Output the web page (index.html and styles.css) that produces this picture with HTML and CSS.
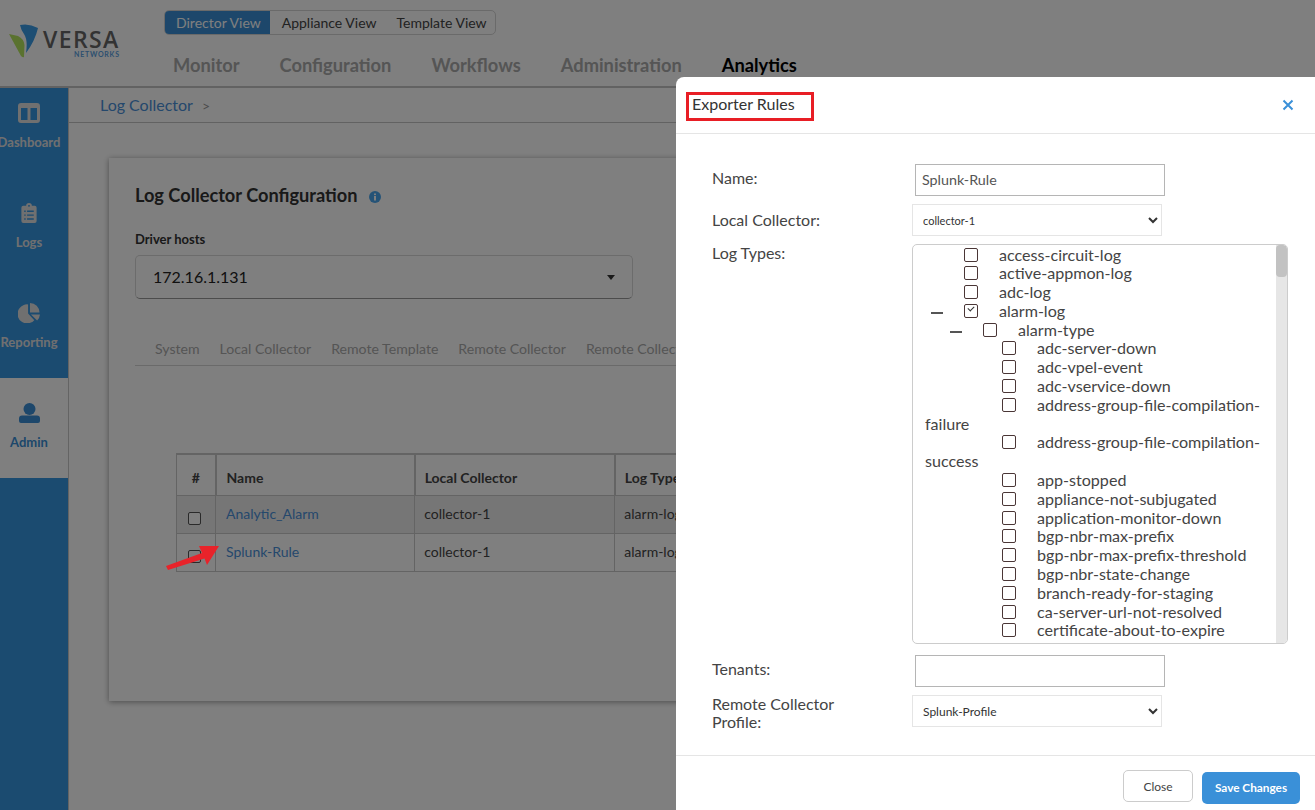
FILE: index.html
```html
<!DOCTYPE html>
<html lang="en">
<head>
<meta charset="utf-8">
<title>Exporter Rules</title>
<link rel="stylesheet" href="styles.css">
</head>
<body>
<div class="app">
  <header class="topbar">
    <div class="logo">
      <svg class="logo-mark" width="30" height="34" viewBox="0 0 30 34">
        <path d="M0 10 L9 12 Q15 15 15.500 21 L15 33 Q14 34 12 32 Z" fill="#b5e45f"/>
        <path d="M11 1 Q20 -1 29 4 Q26 17 17 29 Q19 16 15 10 Q12 6 11 1 Z" fill="#3a9ce6"/>
      </svg>
      <div class="logo-text">
        <span class="logo-name">VERSA</span>
        <span class="logo-sub">NETWORKS</span>
      </div>
    </div>
    <div class="top-right">
      <div class="views">
        <span class="view view-on">Director View</span>
        <span class="view view-mid">Appliance View</span>
        <span class="view view-end">Template View</span>
      </div>
      <nav class="mainnav">
        <span class="navitem">Monitor</span>
        <span class="navitem">Configuration</span>
        <span class="navitem">Workflows</span>
        <span class="navitem">Administration</span>
        <span class="navitem navitem-on">Analytics</span>
      </nav>
    </div>
  </header>
  <div class="body">
    <aside class="sidebar">
      <div class="side-item side-first">
        <svg class="side-icon" width="22" height="20" viewBox="0 0 22 20"><path fill="currentColor" fill-rule="evenodd" d="M3 0h16a3 3 0 0 1 3 3v14a3 3 0 0 1-3 3H3a3 3 0 0 1-3-3V3a3 3 0 0 1 3-3zM3 5v12h6.500V5zM12.500 5v12H19V5z"/></svg>
        <span>Dashboard</span>
      </div>
      <div class="side-item">
        <svg class="side-icon" width="16" height="21" viewBox="0 0 16 21"><path fill="currentColor" fill-rule="evenodd" d="M2 3h3a3 3 0 0 1 6 0h3a2 2 0 0 1 2 2v14a2 2 0 0 1-2 2H2a2 2 0 0 1-2-2V5a2 2 0 0 1 2-2zM7 3a1 1 0 1 0 2 0a1 1 0 0 0-2 0zM3 8v1.500h1.500V8zM6 8v1.500h7V8zM3 12v1.500h1.500V12zM6 12v1.500h7V12zM3 16v1.500h1.500V16zM6 16v1.500h7V16z"/></svg>
        <span>Logs</span>
      </div>
      <div class="side-item">
        <svg class="side-icon" width="23" height="21" viewBox="0 0 23 21"><path fill="currentColor" d="M10 1.500V11l6.500 7a10 10 0 1 1-6.500-16.500zM12 0a10 10 0 0 1 10 10H12zM13 12h9.500a10 10 0 0 1-3 6.300z"/></svg>
        <span>Reporting</span>
      </div>
      <div class="side-item side-on">
        <svg class="side-icon" width="21" height="20" viewBox="0 0 21 20"><circle cx="10.500" cy="6" r="6" fill="currentColor"/><path fill="currentColor" d="M3 12.500h15a3 3 0 0 1 3 3V18a2 2 0 0 1-2 2H2a2 2 0 0 1-2-2v-2.500a3 3 0 0 1 3-3z"/></svg>
        <span>Admin</span>
      </div>
    </aside>
    <main class="main">
      <div class="crumbs"><a class="crumb-link">Log Collector</a><span class="crumb-sep">&gt;</span></div>
      <section class="card">
        <h2 class="card-title">Log Collector Configuration
          <svg class="info" width="12" height="12" viewBox="0 0 12 12"><circle cx="6" cy="6" r="6" fill="#4ba6ee"/><rect x="5" y="5" width="2" height="4.500" fill="#fff"/><rect x="5" y="2.500" width="2" height="1.600" fill="#fff"/></svg>
        </h2>
        <div class="field-label">Driver hosts</div>
        <div class="driver-select"><span>172.16.1.131</span><i class="caret"></i></div>
        <div class="tabs">
          <span class="tab">System</span>
          <span class="tab">Local Collector</span>
          <span class="tab">Remote Template</span>
          <span class="tab">Remote Collector</span>
          <span class="tab">Remote Collector Profile</span>
        </div>
        <table class="grid">
          <colgroup><col class="c-num"><col class="c-name"><col class="c-local"><col class="c-type"></colgroup>
          <thead>
            <tr><th class="num">#</th><th>Name</th><th>Local Collector</th><th>Log Types</th></tr>
          </thead>
          <tbody>
            <tr class="row-shade"><td class="num"><span class="tick"></span></td><td><a class="rule-link">Analytic_Alarm</a></td><td>collector-1</td><td>alarm-log</td></tr>
            <tr><td class="num"><span class="tick"></span></td><td><a class="rule-link">Splunk-Rule</a></td><td>collector-1</td><td>alarm-log</td></tr>
          </tbody>
        </table>
      </section>
    </main>
  </div>

  <div class="scrim"></div>

  <svg class="pointer" width="56" height="26" viewBox="0 0 56 26">
    <path d="M1 23 L37 10 L34 3 L54 3 L42 22 L39.500 15.500 L3 27 Z" fill="#e8232a"/>
  </svg>

  <div class="modal">
    <div class="modal-head">
      <h3 class="modal-title">Exporter Rules</h3>
      <svg class="modal-x" width="12" height="12" viewBox="0 0 12 12"><path d="M1.500 1.500L10.500 10.500M10.500 1.500L1.500 10.500" stroke="#3a90d8" stroke-width="2" fill="none"/></svg>
    </div>
    <div class="modal-body">
      <label class="lab lab-input">Name:</label>
      <input class="text-in" type="text" value="Splunk-Rule">
      <label class="lab lab-sel">Local Collector:</label>
      <select class="sel"><option>collector-1</option></select>
      <label class="lab lab-top">Log Types:</label>
      <div class="tree">
        <div class="tree-list">
          <div class="node l0"><i class="twist"></i><i class="box"></i>access-circuit-log</div>
          <div class="node l0"><i class="twist"></i><i class="box"></i>active-appmon-log</div>
          <div class="node l0"><i class="twist"></i><i class="box"></i>adc-log</div>
          <div class="node l0"><i class="twist twist-open"></i><i class="box box-on"></i>alarm-log</div>
          <div class="node l1"><i class="twist twist-open"></i><i class="box"></i>alarm-type</div>
          <div class="node l2"><i class="twist"></i><i class="box"></i>adc-server-down</div>
          <div class="node l2"><i class="twist"></i><i class="box"></i>adc-vpel-event</div>
          <div class="node l2"><i class="twist"></i><i class="box"></i>adc-vservice-down</div>
          <div class="node l2"><i class="twist"></i><i class="box"></i>address-group-file-compilation-failure</div>
          <div class="node l2"><i class="twist"></i><i class="box"></i>address-group-file-compilation-success</div>
          <div class="node l2"><i class="twist"></i><i class="box"></i>app-stopped</div>
          <div class="node l2"><i class="twist"></i><i class="box"></i>appliance-not-subjugated</div>
          <div class="node l2"><i class="twist"></i><i class="box"></i>application-monitor-down</div>
          <div class="node l2"><i class="twist"></i><i class="box"></i>bgp-nbr-max-prefix</div>
          <div class="node l2"><i class="twist"></i><i class="box"></i>bgp-nbr-max-prefix-threshold</div>
          <div class="node l2"><i class="twist"></i><i class="box"></i>bgp-nbr-state-change</div>
          <div class="node l2"><i class="twist"></i><i class="box"></i>branch-ready-for-staging</div>
          <div class="node l2"><i class="twist"></i><i class="box"></i>ca-server-url-not-resolved</div>
          <div class="node l2"><i class="twist"></i><i class="box"></i>certificate-about-to-expire</div>
        </div>
        <div class="scroll-track"><div class="scroll-thumb"></div></div>
      </div>
      <label class="lab lab-input">Tenants:</label>
      <input class="text-in" type="text">
      <label class="lab lab-top">Remote Collector Profile:</label>
      <select class="sel sel-wide"><option>Splunk-Profile</option></select>
    </div>
    <div class="modal-foot">
      <button class="btn btn-close">Close</button>
      <button class="btn btn-save">Save Changes</button>
    </div>
  </div>
</div>
</body>
</html>
```

FILE: styles.css
```css
* { box-sizing: border-box; }
html, body { margin: 0; padding: 0; height: 100%; }
body { font-family: Lato, "Open Sans", sans-serif; color: #333; background: #fff; overflow: hidden; }
.app { position: relative; width: 1315px; height: 810px; overflow: hidden; display: flex; flex-direction: column; background: #fff; }

/* header */
.topbar { display: flex; height: 88px; flex: none; border-bottom: 2px solid #c4c4c4; }
.logo { width: 164px; flex: none; display: flex; padding: 24px 0 0 9px; gap: 4px; }
.logo-mark { flex: none; }
.logo-text { display: flex; flex-direction: column; align-items: flex-end; padding-top: 6px; }
.logo-name { font-family: "Open Sans", sans-serif; font-size: 23px; line-height: 19px; letter-spacing: 1.400px; font-weight: 600; color: #666; }
.logo-sub { font-size: 7px; line-height: 8px; margin-top: 1px; font-weight: 700; letter-spacing: 0.750px; color: #5aa0e0; }
.top-right { display: flex; flex-direction: column; padding-top: 10px; }
.views { display: inline-flex; align-self: flex-start; height: 25px; border: 1px solid #d4d4d4; border-radius: 5px; overflow: hidden; font-size: 14px; background: #fff; }
.view { line-height: 23px; color: #444; }
.view-on { background: #3a8fd6; color: #fff; padding: 0 9px 0 11px; }
.view-mid { padding: 0 11px 0 12px; }
.view-end { padding: 0 8px 0 9px; }
.mainnav { display: flex; gap: 40px; padding: 18px 0 0 9px; font-size: 18.300px; line-height: 24px; }
.navitem { color: #aaa; font-weight: 700; }
.navitem-on { color: #000; }

/* sidebar */
.body { flex: 1; display: flex; min-height: 0; }
.sidebar { width: 69px; flex: none; background: #3696e0; border-right: 1px solid #c8c8c8; color: #e0e0e0; font-size: 13px; font-weight: 700; }
.side-item { height: 100px; padding: 25px 10px 0 0; display: flex; flex-direction: column; align-items: center; gap: 10px; white-space: nowrap; line-height: 18px; }
.side-first { height: 90px; padding-top: 15px; }
.side-icon { height: 20px; flex: none; }
.side-on { background: #fff; color: #3a8fd6; }

/* main */
.main { flex: 1; min-width: 0; }
.crumbs { height: 35px; border-bottom: 1px solid #c4c4c4; padding: 7px 0 0 31px; font-size: 16px; line-height: 20px; }
.crumb-link { color: #4a90d9; }
.crumb-sep { color: #999; margin-left: 9px; font-size: 14px; }
.card { margin: 35px 0 0 40px; width: 1150px; height: 543px; background: #fff; box-shadow: 0 1px 6px rgba(0,0,0,.4); padding: 25px 26px 0; }
.card-title { margin: 0; font-size: 18.200px; line-height: 24px; font-weight: 700; color: #333; }
.info { margin-left: 7px; vertical-align: -1px; }
.field-label { margin-top: 23px; font-size: 13px; line-height: 18px; font-weight: 700; color: #333; }
.driver-select { position: relative; width: 498px; height: 44px; margin-top: 7px; border: 1px solid #d8d8d8; border-bottom: 1px solid #999; border-radius: 5px; padding: 0 17px; font-size: 16px; line-height: 42px; color: #222; }
.caret { position: absolute; right: 17px; top: 19px; border: 4px solid transparent; border-top: 5px solid #333; border-bottom: 0; }
.tabs { margin-top: 41px; height: 26px; border-bottom: 1px solid #d5d5d5; display: flex; gap: 20px; padding-left: 20px; font-size: 14.100px; line-height: 18px; color: #aaa; white-space: nowrap; }
.grid { margin: 87px 0 0 41px; border-collapse: collapse; table-layout: fixed; width: 640px; font-size: 14px; }
.c-num { width: 39px; } .c-name { width: 199px; } .c-local { width: 200px; } .c-type { width: 200px; }
.grid th, .grid td { border: 1px solid #c8c8c8; padding: 0 9px 2px; text-align: left; height: 38px; color: #444; font-weight: 400; }
.grid th { height: 41px; padding: 6px 9px 0; font-weight: 700; color: #444; border-width: 2px 2px 1px 1px; }
.grid th:nth-child(2), .grid td:nth-child(2) { padding-left: 10px; }
.grid th.num { text-align: center; padding: 6px 0 0; }
.grid td.num { padding: 4px 0 0 11px; }
.row-shade td { background: #ededed; }
.rule-link { color: #4a90d9; }
.tick { display: inline-block; width: 13px; height: 13px; border: 1px solid #555; border-radius: 2px; background: #fff; vertical-align: -3px; }

/* overlays */
.scrim { position: absolute; inset: 0; background: rgba(0,0,0,.5); }
.pointer { position: absolute; left: 165px; top: 543px; overflow: visible; }
.modal { position: absolute; left: 676px; top: 77px; right: 0; bottom: 0; background: #fff; border-radius: 8px 0 0 0; display: flex; flex-direction: column; color: #444; }
.modal-head { height: 57px; flex: none; border-bottom: 1px solid #e5e5e5; display: flex; align-items: flex-start; justify-content: space-between; padding: 15px 21px 0 10px; }
.modal-title { margin: 0; width: 128px; height: 29px; border: 3px solid #e81e25; padding-left: 3px; font-size: 16px; line-height: 18px; font-weight: 400; color: #333; }
.modal-x { margin-top: 7px; }
.modal-body { flex: 1; min-height: 0; display: grid; grid-template-columns: 200px 376px; row-gap: 8px; padding: 30px 0 0 36px; align-content: start; font-size: 16px; }
.lab { line-height: 18px; color: #444; padding-right: 60px; }
.lab-input { padding-top: 5px; }
.lab-sel { padding-top: 7px; }
.lab-top { padding-top: 0; }
.text-in { width: 250px; height: 32px; margin-left: 3px; border: 1px solid #b5b5b5; padding: 0 6px 2px; font: 14.300px Lato, sans-serif; color: #555; border-radius: 0; outline: 0; }
.sel { width: 250px; height: 32px; border: 1px solid #e5e5e5; background: #fff; font: 11px Lato, sans-serif; color: #333; padding: 0 6px; border-radius: 0; }
.sel-wide { font-size: 12px; }
.tree { height: 400px; margin-bottom: 3px; border: 1px solid #ccc; border-radius: 5px; display: flex; overflow: hidden; }
.tree-list { flex: 1; min-width: 0; padding: 0.500px 14px 0 12px; font-size: 16.100px; line-height: 18.800px; color: #444; overflow: hidden; }
.node { white-space: normal; }
.l0 { text-indent: 6px; } .l1 { text-indent: 25px; } .l2 { text-indent: 44px; }
.twist { display: inline-block; width: 33px; height: 10px; position: relative; text-indent: 0; }
.twist-open::before { content: ""; position: absolute; left: 0; top: 5px; width: 12px; height: 2px; background: #555; }
.box { display: inline-block; position: relative; width: 14px; height: 14px; margin-right: 21px; border: 1.500px solid #4a3636; border-radius: 2px; vertical-align: -1px; text-indent: 0; }
.box-on::after { content: ""; position: absolute; left: 3px; top: 1.500px; width: 5px; height: 3px; border-left: 1.200px solid #333; border-bottom: 1.200px solid #333; transform: rotate(-45deg); }
.scroll-track { width: 11px; flex: none; background: #e6e6e6; }
.scroll-thumb { height: 32px; background: #c2c2c2; border-radius: 4px; }
.modal-foot { height: 55px; flex: none; border-top: 1px solid #e5e5e5; display: flex; justify-content: flex-end; align-items: flex-start; gap: 9px; padding: 14px 15px 0 0; }
.btn { font: 12px Lato, sans-serif; border-radius: 5px; cursor: default; }
.btn-close { width: 70px; height: 32px; background: #fff; border: 1px solid #ccc; color: #444; }
.btn-save { width: 98px; height: 32px; margin-top: 2px; padding-bottom: 2px; background: #3a90d8; border: 0; color: #fff; font-weight: 700; font-size: 11.800px; }
```
